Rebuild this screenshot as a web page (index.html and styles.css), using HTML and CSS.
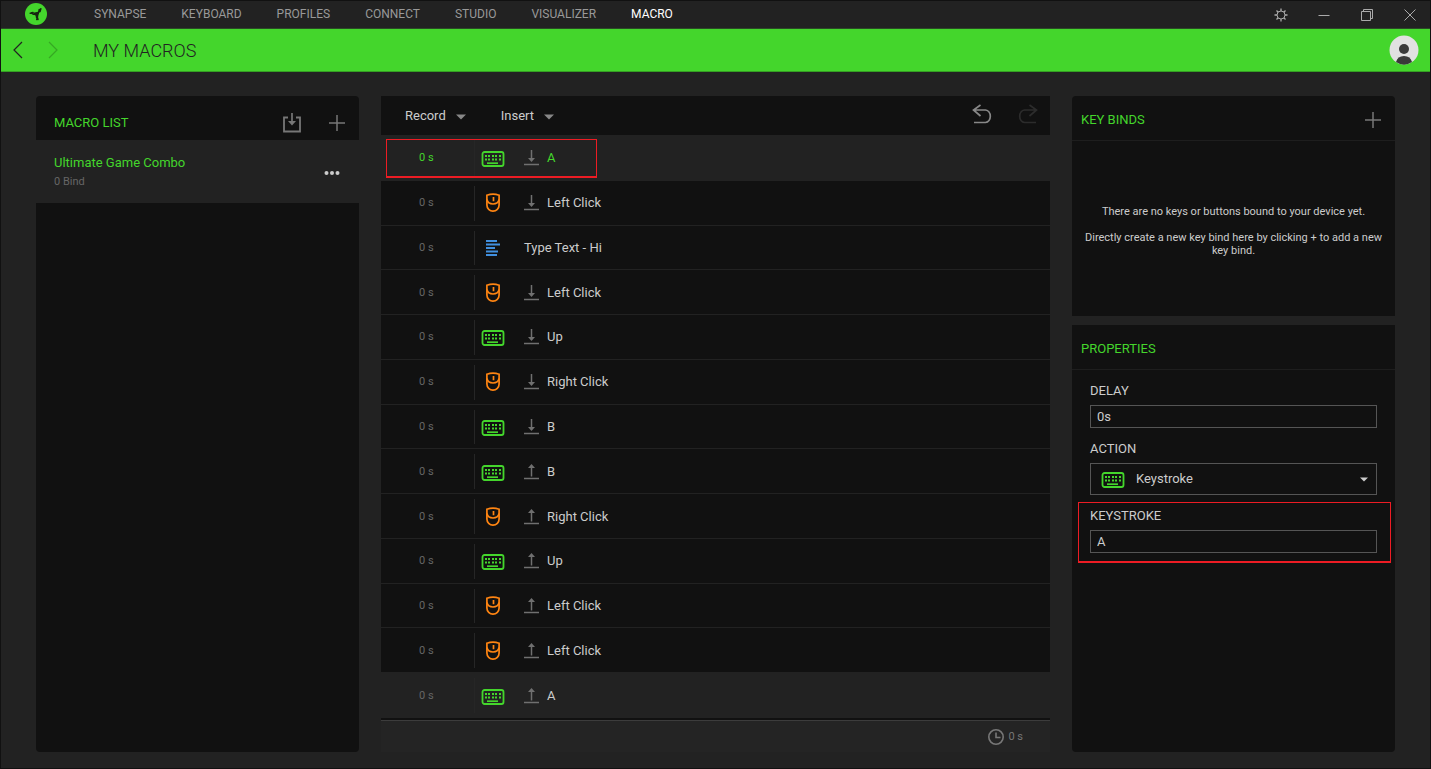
FILE: index.html
```html
<!DOCTYPE html>
<html lang="en">
<head>
<meta charset="utf-8">
<title>My Macros</title>
<link rel="stylesheet" href="styles.css">
</head>
<body>
<svg class="sprite" aria-hidden="true">
  <symbol id="i-keyboard" viewBox="0 0 24 18">
    <rect x="1.500" y="2" width="21" height="14" rx="2" fill="none" stroke="currentColor" stroke-width="1.800"/>
    <path d="M4 6h2M7 6h2M11 6h2M14 6h2M18 6h2M4 9.500h2M7 9.500h2M11 9.500h2M14 9.500h2M18 9.500h2" stroke="currentColor" stroke-width="2"/>
    <path d="M6 13.200h11" stroke="currentColor" stroke-width="1.700"/>
  </symbol>
  <symbol id="i-mouse" viewBox="0 0 16 20">
    <path d="M1.900 2.200Q8 .2 14.100 2.200V12A6.100 6.100 0 0 1 1.900 12Z" fill="none" stroke="currentColor" stroke-width="1.700"/>
    <path d="M1.900 6.500Q3 11 8 11T14.100 6.500M8.500 4v4.200" fill="none" stroke="currentColor" stroke-width="1.700"/>
  </symbol>
  <symbol id="i-text" viewBox="0 0 16 18">
    <path d="M1 2h11M1 5.500h14M1 9h9M1 12.500h12M1 16h11" stroke="currentColor" stroke-width="1.800"/>
  </symbol>
  <symbol id="i-down" viewBox="0 0 16 18">
    <path d="M0 15.500h15" stroke="currentColor" stroke-width="1.500"/>
    <path d="M7.500 1v9" stroke="currentColor" stroke-width="1.500"/>
    <path d="M4 9h7l-3.500 4z" fill="currentColor"/>
  </symbol>
  <symbol id="i-up" viewBox="0 0 16 18">
    <path d="M0 15.500h15" stroke="currentColor" stroke-width="1.500"/>
    <path d="M7.500 4v9.500" stroke="currentColor" stroke-width="1.500"/>
    <path d="M4 5h7L7.500 1z" fill="currentColor"/>
  </symbol>
  <symbol id="i-plus" viewBox="0 0 16 16">
    <path d="M8 0v16M0 8h16" stroke="currentColor" stroke-width="1.500"/>
  </symbol>
  <symbol id="i-undo" viewBox="0 0 20 20">
    <path d="M8.500 1 1.500 6l7 6M1.500 6H13.500a5.500 6.300 0 0 1 0 12.500H2" fill="none" stroke="currentColor" stroke-width="1.700"/>
  </symbol>
  <symbol id="i-caret" viewBox="0 0 10 6">
    <path d="M0 .5h10L5 5.500z" fill="currentColor"/>
  </symbol>
</svg>

<div class="window">
  <header class="titlebar">
    <svg class="logo" viewBox="0 0 22 22" aria-label="Logo">
      <circle cx="11" cy="11" r="11" fill="#44d62c"/>
      <g fill="none" stroke="#16250f" stroke-linecap="round" stroke-linejoin="round" stroke-width="1.600">
        <path d="M11.500 11.500 8.500 11.300 6.500 9.800M5.300 10.300 8 9.600M11.500 11.500 13.800 9 14.300 6.500M15.800 5.800 15 8.500M11.500 11.500 11.500 14 13 16.300M11.800 16.500 12.500 14"/>
      </g>
      <path d="M8 9.800 14.500 8.500 12.800 14.500 11 13z" fill="#16250f"/>
    </svg>
    <nav class="nav">
      <a href="#">SYNAPSE</a><a href="#">KEYBOARD</a><a href="#">PROFILES</a><a href="#">CONNECT</a><a href="#">STUDIO</a><a href="#">VISUALIZER</a><a href="#" class="current">MACRO</a>
    </nav>
    <div class="window-buttons">
      <button aria-label="Settings"><svg viewBox="0 0 14 14"><circle cx="7" cy="7" r="4" fill="none" stroke="currentColor"/><path d="M7 3V.5M7 11v2.500M3 7H.5M11 7h2.500M4.200 4.200 2.500 2.500M9.800 4.200l1.700-1.700M4.200 9.800l-1.700 1.700M9.800 9.800l1.700 1.700" stroke="currentColor" stroke-width="1.300"/></svg></button>
      <button aria-label="Minimize"><svg viewBox="0 0 14 14"><path d="M1.500 7.500h11" stroke="currentColor"/></svg></button>
      <button aria-label="Restore"><svg viewBox="0 0 14 14"><path d="M1.500 3.500h9v9h-9zM3.500 3.500v-2h9v9h-2" fill="none" stroke="currentColor"/></svg></button>
      <button aria-label="Close"><svg viewBox="0 0 14 14"><path d="m1.500 1.500 11 11M12.500 1.500l-11 11" stroke="currentColor"/></svg></button>
    </div>
  </header>

  <div class="pagebar">
    <div class="history">
      <button aria-label="Back"><svg viewBox="0 0 10 18"><path d="M9 1 1 9l8 8" fill="none" stroke="currentColor" stroke-width="1.200"/></svg></button>
      <button aria-label="Forward" disabled><svg viewBox="0 0 10 18"><path d="m1 1 8 8-8 8" fill="none" stroke="currentColor" stroke-width="1.200"/></svg></button>
    </div>
    <h1>MY MACROS</h1>
    <button class="avatar" aria-label="Account">
      <svg viewBox="0 0 30 30"><circle cx="15" cy="15" r="14.500" fill="#e1e1e1"/><circle cx="15" cy="14" r="5" fill="#393939"/><path d="M7 27Q8.500 21 15 21T23 27A14.500 14.500 0 0 1 7 27z" fill="#393939"/></svg>
    </button>
  </div>

  <main class="columns">
    <section class="panel list-panel">
      <div class="list-head">
        <h2>MACRO LIST</h2>
        <button class="import" aria-label="Import"><svg viewBox="0 0 18 20"><path d="M5 4.500H1v14h16v-14h-4" fill="none" stroke="currentColor" stroke-width="1.800"/><path d="M9 0v9" stroke="currentColor" stroke-width="1.700"/><path d="M5 8h8l-4 4.500z" fill="currentColor"/></svg></button>
        <button class="plus" aria-label="Add macro"><svg><use href="#i-plus"/></svg></button>
      </div>
      <div class="macro">
        <div class="macro-text">
          <span class="macro-name">Ultimate Game Combo</span>
          <span class="macro-binds">0 Bind</span>
        </div>
        <button class="more" aria-label="More"><svg viewBox="0 0 16 4"><circle cx="2.500" cy="2" r="2" fill="currentColor"/><circle cx="8" cy="2" r="2" fill="currentColor"/><circle cx="13.500" cy="2" r="2" fill="currentColor"/></svg></button>
      </div>
    </section>

    <section class="editor">
      <div class="toolbar">
        <button class="menu">Record <svg><use href="#i-caret"/></svg></button>
        <button class="menu">Insert <svg><use href="#i-caret"/></svg></button>
        <div class="edit-history">
          <button aria-label="Undo"><svg><use href="#i-undo"/></svg></button>
          <button class="redo" aria-label="Redo" disabled><svg><use href="#i-undo"/></svg></button>
        </div>
      </div>
      <ol class="steps">
        <li class="step selected marked"><span class="time">0 s</span><span class="body"><svg class="key"><use href="#i-keyboard"/></svg><svg class="dir"><use href="#i-down"/></svg>A</span></li>
        <li class="step"><span class="time">0 s</span><span class="body"><svg class="mouse"><use href="#i-mouse"/></svg><svg class="dir"><use href="#i-down"/></svg>Left Click</span></li>
        <li class="step"><span class="time">0 s</span><span class="body"><svg class="text"><use href="#i-text"/></svg>Type Text - Hi</span></li>
        <li class="step"><span class="time">0 s</span><span class="body"><svg class="mouse"><use href="#i-mouse"/></svg><svg class="dir"><use href="#i-down"/></svg>Left Click</span></li>
        <li class="step"><span class="time">0 s</span><span class="body"><svg class="key"><use href="#i-keyboard"/></svg><svg class="dir"><use href="#i-down"/></svg>Up</span></li>
        <li class="step"><span class="time">0 s</span><span class="body"><svg class="mouse"><use href="#i-mouse"/></svg><svg class="dir"><use href="#i-down"/></svg>Right Click</span></li>
        <li class="step"><span class="time">0 s</span><span class="body"><svg class="key"><use href="#i-keyboard"/></svg><svg class="dir"><use href="#i-down"/></svg>B</span></li>
        <li class="step"><span class="time">0 s</span><span class="body"><svg class="key"><use href="#i-keyboard"/></svg><svg class="dir"><use href="#i-up"/></svg>B</span></li>
        <li class="step"><span class="time">0 s</span><span class="body"><svg class="mouse"><use href="#i-mouse"/></svg><svg class="dir"><use href="#i-up"/></svg>Right Click</span></li>
        <li class="step"><span class="time">0 s</span><span class="body"><svg class="key"><use href="#i-keyboard"/></svg><svg class="dir"><use href="#i-up"/></svg>Up</span></li>
        <li class="step"><span class="time">0 s</span><span class="body"><svg class="mouse"><use href="#i-mouse"/></svg><svg class="dir"><use href="#i-up"/></svg>Left Click</span></li>
        <li class="step"><span class="time">0 s</span><span class="body"><svg class="mouse"><use href="#i-mouse"/></svg><svg class="dir"><use href="#i-up"/></svg>Left Click</span></li>
        <li class="step paired"><span class="time">0 s</span><span class="body"><svg class="key"><use href="#i-keyboard"/></svg><svg class="dir"><use href="#i-up"/></svg>A</span></li>
      </ol>
      <div class="total">
        <svg viewBox="0 0 16 16"><circle cx="8" cy="8" r="7.200" fill="none" stroke="currentColor" stroke-width="1.600"/><path d="M8 3.500v5h4.500" fill="none" stroke="currentColor" stroke-width="1.600"/></svg>
        <span>0 s</span>
      </div>
    </section>

    <div class="side">
      <section class="panel binds">
        <div class="side-head">
          <h2>KEY BINDS</h2>
          <button class="plus" aria-label="Add key bind"><svg><use href="#i-plus"/></svg></button>
        </div>
        <div class="empty">
          <p>There are no keys or buttons bound to your device yet.</p>
          <p>Directly create a new key bind here by clicking + to add a new key bind.</p>
        </div>
      </section>
      <section class="panel properties">
        <div class="side-head"><h2>PROPERTIES</h2></div>
        <form class="fields">
          <div class="field">
            <label for="delay">DELAY</label>
            <input id="delay" type="text" value="0s">
          </div>
          <div class="field">
            <label for="action">ACTION</label>
            <div class="select">
              <svg class="key"><use href="#i-keyboard"/></svg>
              <select id="action"><option>Keystroke</option></select>
              <svg class="caret"><use href="#i-caret"/></svg>
            </div>
          </div>
          <div class="field marked">
            <label for="keystroke">KEYSTROKE</label>
            <input id="keystroke" type="text" value="A">
          </div>
        </form>
      </section>
    </div>
  </main>
</div>
</body>
</html>
```
FILE: styles.css
```css
* {
  box-sizing: border-box;
}

body {
  margin: 0;
  background: #222;
  color: #ccc;
  font: 13px/16px Roboto, "Liberation Sans", sans-serif;
}

h1, h2, p, ol {
  margin: 0;
  padding: 0;
  font-weight: 400;
}

button {
  display: flex;
  align-items: center;
  padding: 0;
  border: 0;
  background: none;
  color: inherit;
  font: inherit;
}

svg {
  display: block;
  flex: none;
}

.sprite {
  position: absolute;
  width: 0;
  height: 0;
}

.window {
  display: flex;
  flex-direction: column;
  min-height: 100vh;
  border: 1px solid #111;
}

/* Title bar */
.titlebar {
  display: flex;
  align-items: center;
  height: 28px;
  padding: 0 13px 0 24px;
  border-bottom: 1px solid #2b4a26;
}

.logo {
  width: 22px;
  height: 22px;
  margin-bottom: 1px;
}

.nav {
  display: flex;
  gap: 35px;
  margin: 0 0 2px 47px;
  font-size: 12px;
}

.nav a {
  color: #999;
  text-decoration: none;
}

.nav .current {
  color: #fff;
}

.window-buttons {
  display: flex;
  gap: 29px;
  margin-left: auto;
  color: #aaa;
}

.window-buttons svg {
  width: 14px;
  height: 14px;
}

/* Page bar */
.pagebar {
  display: flex;
  align-items: center;
  height: 43px;
  padding: 0 11px 0 12px;
  border-bottom: 1px solid #35a023;
  background: #44d62c;
  color: #222;
}

.history {
  display: flex;
  gap: 25px;
}

.history svg {
  width: 10px;
  height: 18px;
}

.history button:disabled {
  color: #36a824;
}

.pagebar h1 {
  margin: 2px 0 0 35px;
  font-size: 18px;
  font-weight: 300;
  line-height: 24px;
}

.avatar {
  margin-left: auto;
}

.avatar svg {
  width: 30px;
  height: 30px;
}

/* Columns */
.columns {
  display: grid;
  flex: 1;
  grid-template-columns: 323px minmax(0, 1fr) 323px;
  gap: 22px;
  padding: 24px 35px 16px;
}

.panel {
  border-radius: 4px;
  background: #111;
}

.panel h2 {
  color: #44d62c;
  font-size: 13px;
}

.plus {
  color: #777;
}

.plus svg {
  width: 16px;
  height: 16px;
}

/* Macro list */
.list-head {
  display: flex;
  align-items: center;
  gap: 28px;
  height: 44px;
  padding: 10px 14px 0 18px;
}

.list-head .import {
  margin-left: auto;
  color: #777;
}

.import svg {
  width: 18px;
  height: 20px;
}

.macro {
  display: flex;
  align-items: center;
  justify-content: space-between;
  padding: 15px 19px 13px 18px;
  background: #222;
}

.macro-text {
  display: grid;
  gap: 3px;
}

.macro-name {
  color: #44d62c;
}

.macro-binds {
  color: #666;
  font-size: 11px;
}

.more svg {
  width: 16px;
  height: 4px;
}

/* Step editor */
.editor {
  display: flex;
  flex-direction: column;
  background: #111;
}

.toolbar {
  display: flex;
  align-items: center;
  gap: 35px;
  height: 39px;
  padding: 0 12px 0 24px;
}

.menu {
  gap: 10px;
  padding-top: 1px;
}

.menu svg {
  width: 10px;
  height: 6px;
  margin-top: 2px;
  color: #888;
}

.edit-history {
  display: flex;
  gap: 26px;
  margin-left: auto;
  padding-bottom: 4px;
  color: #888;
}

.edit-history svg {
  width: 20px;
  height: 20px;
}

.edit-history .redo {
  color: #2c2c2c;
  transform: scaleX(-1);
}

.steps {
  display: flex;
  flex: 1;
  flex-direction: column;
  list-style: none;
}

.step {
  position: relative;
  display: flex;
  flex: 1 0 44px;
  padding: 5px 0 4px;
  border-bottom: 1px solid #222;
}

.step.selected {
  flex-basis: 45px;
}

.step.selected,
.step.paired {
  background: #222;
}

.time {
  display: flex;
  align-items: center;
  width: 94px;
  padding-left: 38px;
  border-right: 1px solid #262626;
  color: #666;
  font-size: 11px;
}

.body {
  display: flex;
  flex: 1;
  align-items: center;
}

.selected .time,
.selected .body {
  color: #44d62c;
}

.key {
  width: 24px;
  height: 18px;
  color: #44d62c;
}

.body .key {
  margin: 2px 19px 0 6px;
}

.body .mouse {
  width: 16px;
  height: 20px;
  margin: 0 23px 0 10px;
  color: #ff8512;
}

.body .text {
  width: 16px;
  height: 18px;
  margin: 0 23px 0 10px;
  color: #418fde;
}

.dir {
  width: 16px;
  height: 18px;
  margin-right: 7px;
  color: #707070;
}

.total {
  display: flex;
  align-items: center;
  justify-content: flex-end;
  gap: 4px;
  height: 32px;
  margin-top: 2px;
  padding-right: 27px;
  border-top: 1px solid #3c3c3c;
  background: #242424;
  color: #777;
  font-size: 11px;
}

.total svg {
  width: 16px;
  height: 16px;
}

/* Side column */
.side {
  display: flex;
  flex-direction: column;
  gap: 9px;
}

.binds {
  display: flex;
  flex-direction: column;
  min-height: 220px;
  border-radius: 4px 4px 0 0;
}

.properties {
  flex: 1;
  border-radius: 0 0 4px 4px;
}

.side-head {
  display: flex;
  align-items: center;
  justify-content: space-between;
  height: 45px;
  padding: 3px 14px 0 9px;
  border-bottom: 1px solid #1e1e1e;
}

.empty {
  display: grid;
  flex: 1;
  align-content: center;
  gap: 13px;
  padding: 4px 10px 0;
  font-size: 11px;
  line-height: 13px;
  text-align: center;
}

.fields {
  display: grid;
  gap: 13px;
  padding: 13px 18px;
}

.field {
  position: relative;
  display: grid;
  gap: 6px;
}

.field input,
.field select {
  width: 100%;
  height: 23px;
  margin: 0;
  padding: 0 6px;
  border: 1px solid #555;
  border-radius: 0;
  background: #111;
  color: #ccc;
  font: inherit;
}

.select {
  position: relative;
}

.field select {
  display: block;
  height: 32px;
  padding-left: 45px;
  appearance: none;
}

.select svg {
  position: absolute;
  top: 8px;
  left: 11px;
  pointer-events: none;
}

.select .caret {
  top: 14px;
  right: 9px;
  left: auto;
  width: 8px;
  height: 5px;
}

/* Red highlight frames */
.marked::after {
  position: absolute;
  border: 1px solid #ed1c24;
  border-bottom-width: 2px;
  content: "";
  pointer-events: none;
}

.step.marked::after {
  top: 4px;
  bottom: 2px;
  left: 5px;
  width: 209px;
}

.field.marked::after {
  inset: -6px -14px -10px -12px;
}
```
